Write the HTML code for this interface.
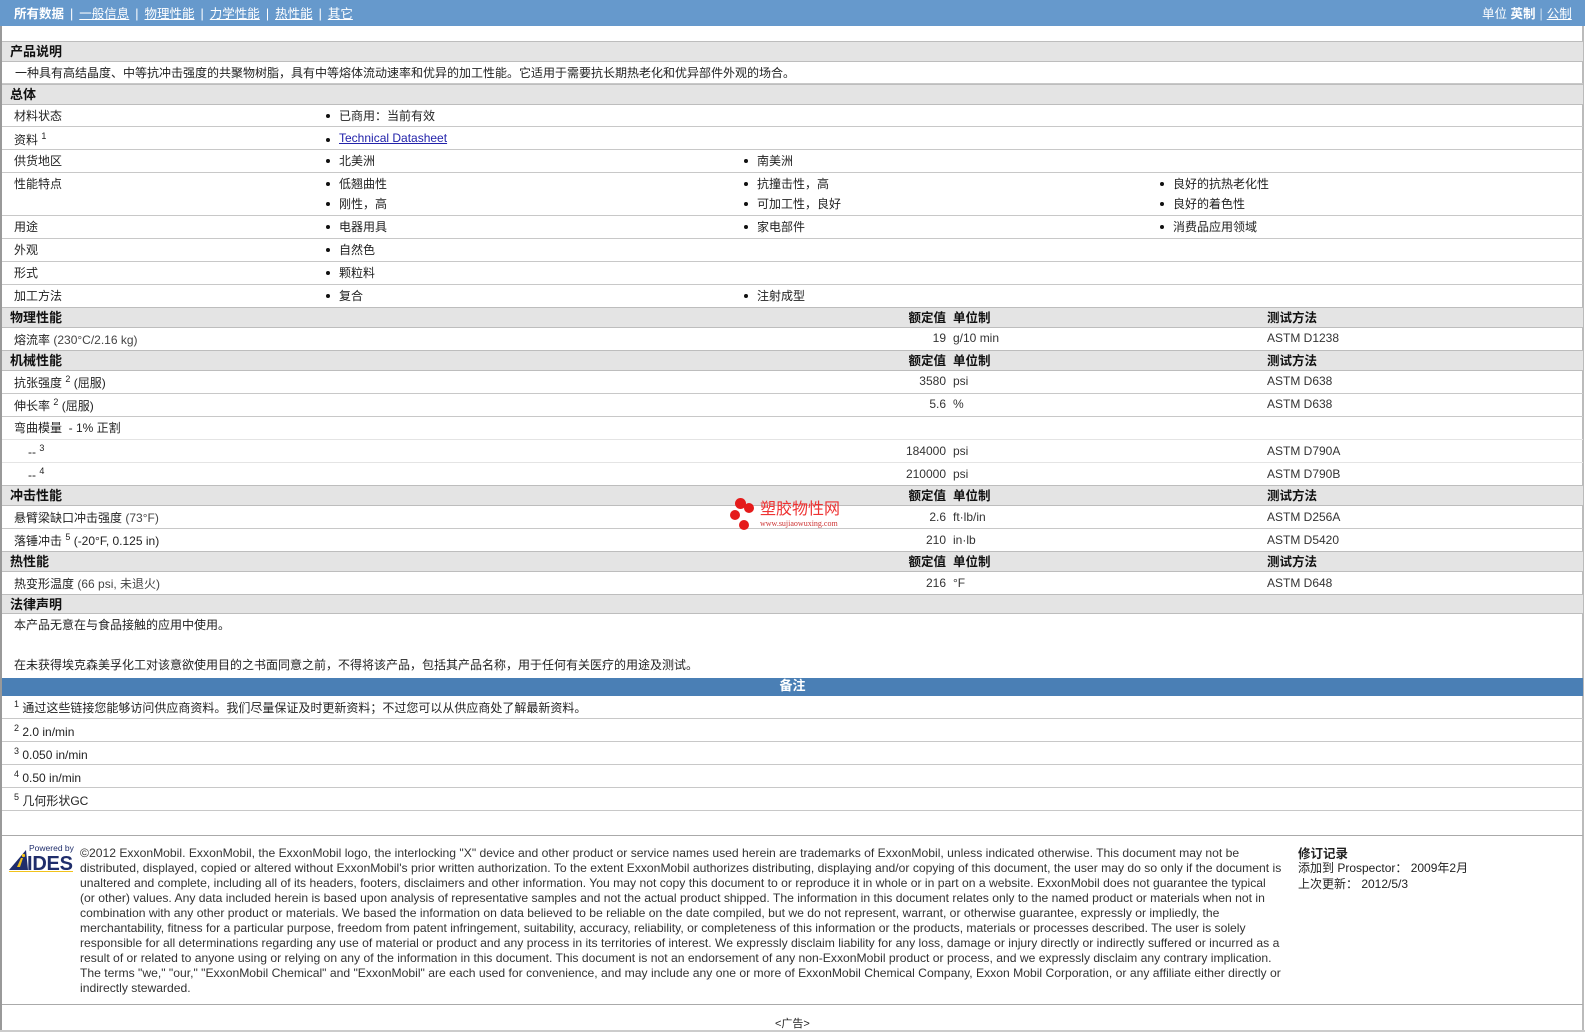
<!DOCTYPE html>
<html><head><meta charset="utf-8"><style>
*{margin:0;padding:0;box-sizing:border-box}
body{width:1585px;height:1032px;background:#fff;font-family:"Liberation Sans","Noto Sans CJK SC",sans-serif;font-size:12px;color:#222;position:relative;overflow:hidden}
.a{position:absolute;white-space:nowrap}
.r{position:absolute;left:2px;width:1581px;border-bottom:1px solid #c8c8c8}
.h{position:absolute;left:2px;width:1581px;background:#e4e4e4;border-top:1px solid #bdbdbd;border-bottom:1px solid #bdbdbd}
.ht{position:absolute;left:8px;font-weight:bold;font-size:13px;color:#111}
.l{position:absolute;left:12px}
.b{position:absolute}
.b:before{content:"";position:absolute;left:-13px;top:7px;width:4px;height:4px;border-radius:50%;background:#111}
.v{position:absolute;right:637px;text-align:right;color:#333}
.u{position:absolute;left:951px;color:#333}
.m{position:absolute;left:1265px;color:#333}
.hb{position:absolute;font-weight:bold;font-size:12.5px;color:#111}
sup{font-size:9px;vertical-align:5px}
.nv{color:#fff;text-decoration:underline}
.sep{color:#fff;margin:0 6px}
</style></head><body>
<div class="a" style="left:0;top:0;width:1585px;height:26px;background:#6699cc"></div>
<div class="a" style="left:14px;top:3px;color:#fff;font-size:12.5px"><b>所有数据</b><span class="sep">|</span><span class="nv">一般信息</span><span class="sep">|</span><span class="nv">物理性能</span><span class="sep">|</span><span class="nv">力学性能</span><span class="sep">|</span><span class="nv">热性能</span><span class="sep">|</span><span class="nv">其它</span></div>
<div class="a" style="left:1482px;top:3px;color:#fff;font-size:12.5px">单位 <b>英制</b><span style="margin:0 4px;color:#cde">|</span><span class="nv">公制</span></div>
<div class="a" style="left:0;top:26px;width:2px;height:1006px;background:#999"></div>
<div class="a" style="left:1582px;top:26px;width:2px;height:1006px;background:#bbb"></div>

<div class="h" style="top:41px;height:21px"><span class="ht" style="top:-1px">产品说明</span></div>
<div class="r" style="top:62px;height:22px"><span class="l" style="left:13px;top:2px">一种具有高结晶度、中等抗冲击强度的共聚物树脂，具有中等熔体流动速率和优异的加工性能。它适用于需要抗长期热老化和优异部件外观的场合。</span></div>
<div class="h" style="top:84px;height:21px"><span class="ht" style="top:-1px">总体</span></div>
<div class="r" style="top:105px;height:22px"><span class="l" style="top:2px">材料状态</span><span class="b" style="left:337px;top:2px">已商用：当前有效</span></div>
<div class="r" style="top:127px;height:23px"><span class="l" style="top:4px">资料 <sup>1</sup></span><span class="b" style="left:337px;top:4px;color:#2222aa;text-decoration:underline">Technical Datasheet</span></div>
<div class="r" style="top:150px;height:23px"><span class="l" style="top:2px">供货地区</span><span class="b" style="left:337px;top:2px">北美洲</span><span class="b" style="left:755px;top:2px">南美洲</span></div>
<div class="r" style="top:173px;height:43px"><span class="l" style="top:2px">性能特点</span><span class="b" style="left:337px;top:2px">低翘曲性</span><span class="b" style="left:755px;top:2px">抗撞击性，高</span><span class="b" style="left:1171px;top:2px">良好的抗热老化性</span><span class="b" style="left:337px;top:22px">刚性，高</span><span class="b" style="left:755px;top:22px">可加工性，良好</span><span class="b" style="left:1171px;top:22px">良好的着色性</span></div>
<div class="r" style="top:216px;height:23px"><span class="l" style="top:2px">用途</span><span class="b" style="left:337px;top:2px">电器用具</span><span class="b" style="left:755px;top:2px">家电部件</span><span class="b" style="left:1171px;top:2px">消费品应用领域</span></div>
<div class="r" style="top:239px;height:23px"><span class="l" style="top:2px">外观</span><span class="b" style="left:337px;top:2px">自然色</span></div>
<div class="r" style="top:262px;height:23px"><span class="l" style="top:2px">形式</span><span class="b" style="left:337px;top:2px">颗粒料</span></div>
<div class="r" style="top:285px;height:23px"><span class="l" style="top:2px">加工方法</span><span class="b" style="left:337px;top:2px">复合</span><span class="b" style="left:755px;top:2px">注射成型</span></div>

<div class="h" style="top:307px;height:21px"><span class="ht" style="top:-1px">物理性能</span><span class="hb" style="right:637px;top:-1px">额定值</span><span class="hb" style="left:951px;top:-1px">单位制</span><span class="hb" style="left:1265px;top:-1px">测试方法</span></div>
<div class="r" style="top:328px;height:23px"><span class="l" style="top:3px">熔流率 <span style="color:#444">(230°C/2.16 kg)</span></span><span class="v" style="top:3px">19</span><span class="u" style="top:3px">g/10 min</span><span class="m" style="top:3px">ASTM D1238</span></div>
<div class="h" style="top:350px;height:21px"><span class="ht" style="top:-1px">机械性能</span><span class="hb" style="right:637px;top:-1px">额定值</span><span class="hb" style="left:951px;top:-1px">单位制</span><span class="hb" style="left:1265px;top:-1px">测试方法</span></div>
<div class="r" style="top:371px;height:23px"><span class="l" style="top:3px">抗张强度 <sup>2</sup> (屈服)</span><span class="v" style="top:3px">3580</span><span class="u" style="top:3px">psi</span><span class="m" style="top:3px">ASTM D638</span></div>
<div class="r" style="top:394px;height:23px"><span class="l" style="top:3px">伸长率 <sup>2</sup> (屈服)</span><span class="v" style="top:3px">5.6</span><span class="u" style="top:3px">%</span><span class="m" style="top:3px">ASTM D638</span></div>
<div class="r" style="top:417px;height:23px;border-color:#e4e4e4"><span class="l" style="top:2px">弯曲模量 &nbsp;- 1% 正割</span></div>
<div class="r" style="top:440px;height:23px;border-color:#e4e4e4"><span class="l" style="left:26px;top:3px">-- <sup>3</sup></span><span class="v" style="top:4px">184000</span><span class="u" style="top:4px">psi</span><span class="m" style="top:4px">ASTM D790A</span></div>
<div class="r" style="top:463px;height:23px"><span class="l" style="left:26px;top:3px">-- <sup>4</sup></span><span class="v" style="top:4px">210000</span><span class="u" style="top:4px">psi</span><span class="m" style="top:4px">ASTM D790B</span></div>
<div class="h" style="top:485px;height:21px"><span class="ht" style="top:-1px">冲击性能</span><span class="hb" style="right:637px;top:-1px">额定值</span><span class="hb" style="left:951px;top:-1px">单位制</span><span class="hb" style="left:1265px;top:-1px">测试方法</span></div>
<div class="r" style="top:506px;height:23px"><span class="l" style="top:3px">悬臂梁缺口冲击强度 <span style="color:#444">(73°F)</span></span><span class="v" style="top:4px">2.6</span><span class="u" style="top:4px">ft·lb/in</span><span class="m" style="top:4px">ASTM D256A</span></div>
<div class="r" style="top:529px;height:23px"><span class="l" style="top:3px">落锤冲击 <sup>5</sup> (-20°F, 0.125 in)</span><span class="v" style="top:4px">210</span><span class="u" style="top:4px">in·lb</span><span class="m" style="top:4px">ASTM D5420</span></div>
<div class="h" style="top:551px;height:21px"><span class="ht" style="top:-1px">热性能</span><span class="hb" style="right:637px;top:-1px">额定值</span><span class="hb" style="left:951px;top:-1px">单位制</span><span class="hb" style="left:1265px;top:-1px">测试方法</span></div>
<div class="r" style="top:572px;height:23px"><span class="l" style="top:3px">热变形温度 <span style="color:#444">(66 psi, 未退火)</span></span><span class="v" style="top:4px">216</span><span class="u" style="top:4px">°F</span><span class="m" style="top:4px">ASTM D648</span></div>
<div class="h" style="top:594px;height:20px"><span class="ht" style="top:-1px">法律声明</span></div>
<div class="a" style="left:14px;top:616px">本产品无意在与食品接触的应用中使用。</div>
<div class="a" style="left:14px;top:656px">在未获得埃克森美孚化工对该意欲使用目的之书面同意之前，不得将该产品，包括其产品名称，用于任何有关医疗的用途及测试。</div>
<div class="a" style="left:2px;top:678px;width:1581px;height:18px;background:#4a7fb5;color:#fff;font-weight:bold;font-size:13px;text-align:center;line-height:16px">备注</div>
<div class="r" style="top:696px;height:23px"><span class="l" style="top:3px"><sup>1</sup> 通过这些链接您能够访问供应商资料。我们尽量保证及时更新资料；不过您可以从供应商处了解最新资料。</span></div>
<div class="r" style="top:719px;height:23px"><span class="l" style="top:4px"><sup>2</sup> 2.0 in/min</span></div>
<div class="r" style="top:742px;height:23px"><span class="l" style="top:4px"><sup>3</sup> 0.050 in/min</span></div>
<div class="r" style="top:765px;height:23px"><span class="l" style="top:4px"><sup>4</sup> 0.50 in/min</span></div>
<div class="r" style="top:788px;height:23px"><span class="l" style="top:4px"><sup>5</sup> 几何形状GC</span></div>

<!-- watermark -->
<div class="a" style="left:735px;top:498px;width:11px;height:11px;border-radius:50%;background:#e51b1b"></div>
<div class="a" style="left:744px;top:503px;width:10px;height:10px;border-radius:50%;background:#e51b1b"></div>
<div class="a" style="left:730px;top:510px;width:10px;height:10px;border-radius:50%;background:#e51b1b"></div>
<div class="a" style="left:739px;top:520px;width:10px;height:10px;border-radius:50%;background:#e51b1b"></div>
<div class="a" style="left:760px;top:502px;font-size:16px;color:#e33;line-height:16px">塑胶物性网</div>
<div class="a" style="left:760px;top:519px;font-size:8px;color:#c33;font-family:'Liberation Serif',serif">www.sujiaowuxing.com</div>

<div class="a" style="left:2px;top:835px;width:1581px;border-top:1px solid #aaa"></div>
<!-- IDES logo -->
<svg class="a" style="left:7px;top:843px" width="68" height="30" viewBox="0 0 68 30"><polygon points="2,27 19,7 21,27" fill="#1f2d6b"/><polygon points="10,24 14,15 16,15 13,24" fill="#f2c31b"/><circle cx="16.5" cy="12.5" r="1.6" fill="#f2c31b"/><text x="22" y="8" font-family="Liberation Sans" font-size="8.5" fill="#1f2d6b">Powered by</text><text x="20" y="27" font-family="Liberation Sans" font-size="20" font-weight="bold" fill="#1f2d6b" textLength="46">IDES</text><rect x="2" y="28" width="64" height="1" fill="#f2c31b"/></svg>
<div class="a" style="left:80px;top:846px;width:1205px;white-space:normal;font-size:12.15px;line-height:15px;color:#333">©2012 ExxonMobil. ExxonMobil, the ExxonMobil logo, the interlocking "X" device and other product or service names used herein are trademarks of ExxonMobil, unless indicated otherwise. This document may not be distributed, displayed, copied or altered without ExxonMobil's prior written authorization. To the extent ExxonMobil authorizes distributing, displaying and/or copying of this document, the user may do so only if the document is unaltered and complete, including all of its headers, footers, disclaimers and other information. You may not copy this document to or reproduce it in whole or in part on a website. ExxonMobil does not guarantee the typical (or&nbsp;other)&nbsp;values. Any data included herein is based upon analysis of representative samples and not the actual product shipped. The information in this document relates only to the named product or materials when not in combination with any other product or materials. We based the information on data believed to be reliable on the date compiled, but we do not represent, warrant, or otherwise guarantee, expressly or impliedly, the merchantability, fitness for a particular purpose, freedom from patent infringement, suitability, accuracy, reliability, or completeness of this information or the products, materials or processes described. The user is solely responsible for all determinations regarding any use of material or product and any process in its territories of interest. We expressly disclaim liability for any loss, damage or injury directly or indirectly suffered or incurred as a result of or related to anyone using or relying on any of the information in this document. This document is not an endorsement of any non-ExxonMobil product or process, and we expressly disclaim any contrary implication. The terms "we," "our," "ExxonMobil Chemical" and "ExxonMobil" are each used for convenience, and may include any one or more of ExxonMobil Chemical Company, Exxon Mobil Corporation, or any affiliate either directly or indirectly stewarded.</div>
<div class="a" style="left:1298px;top:843px;font-weight:bold;font-size:12.5px">修订记录</div>
<div class="a" style="left:1298px;top:859px">添加到 Prospector： 2009年2月</div>
<div class="a" style="left:1298px;top:875px">上次更新： 2012/5/3</div>
<div class="a" style="left:2px;top:1004px;width:1581px;border-top:1px solid #aaa"></div>
<div class="a" style="left:775px;top:1015px;font-size:11px">&lt;广告&gt;</div>
<div class="a" style="left:0;top:1030px;width:1585px;height:2px;background:#ccc"></div>
</body></html>
